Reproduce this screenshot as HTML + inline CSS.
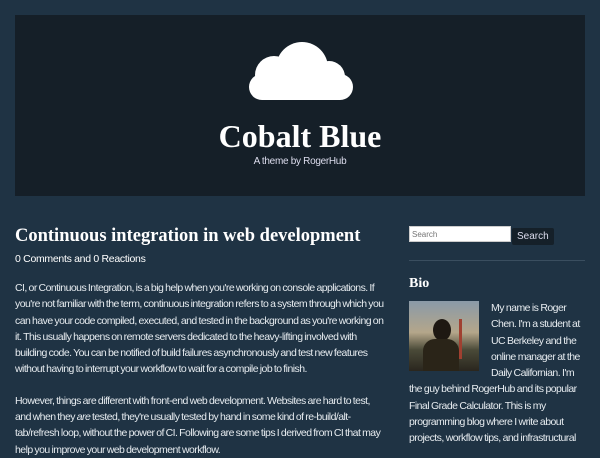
<!DOCTYPE html>
<html><head><style>
html,body{margin:0;height:450px;}
body{background:#1f3344;width:600px;overflow:hidden;font-family:"Liberation Sans",sans-serif;color:#fff;position:relative;}
.hdr{position:absolute;left:15px;top:15px;width:570px;height:181px;background:#151f28;}
.t{position:absolute;left:0;width:570px;text-align:center;top:101px;font-family:"Liberation Serif",serif;font-weight:bold;font-size:32px;line-height:40px;}
.s{position:absolute;left:0;width:570px;text-align:center;top:141px;font-size:10px;color:#dde;letter-spacing:-0.3px;}
.main{position:absolute;left:15px;top:225px;width:372px;}
h1{font-family:"Liberation Serif",serif;font-size:18.5px;margin:0;line-height:22px;}
.meta{font-size:10.5px;margin-top:6px;letter-spacing:-0.3px;}
p{font-size:10.5px;line-height:16.3px;margin:15px 0 0;color:#e6ebef;letter-spacing:-0.55px;word-spacing:-0.6px;}
.side{position:absolute;left:409px;top:226px;width:176px;}
input{width:96px;height:14px;border:1px solid #ccc;font-size:8px;padding:0 2px;margin:0;vertical-align:top;box-sizing:content-box;}
.btn{display:inline-block;background:#152029;color:#dde;font-size:10px;padding:0 5px;height:17px;line-height:17px;margin-left:1px;border-radius:2px;}
.hr{border-top:1px solid #3a4e5f;margin-top:15px;}
h2{font-family:"Liberation Serif",serif;font-size:14px;margin:15px 0 0;}
.bio{font-size:10.5px;line-height:16.3px;margin-top:8px;color:#e6ebef;letter-spacing:-0.55px;word-spacing:-0.4px;}
.img{float:left;width:70px;height:70px;margin:1px 12px 4px 0;background:linear-gradient(180deg,#8a9aa8 0%,#b4a68a 45%,#4a4a38 70%,#2a261e 100%);position:relative;}
</style></head><body>
<div class="hdr">
<svg style="position:absolute;left:234px;top:26px" width="104" height="60" viewBox="0 0 104 60">
<g fill="#fff"><circle cx="53" cy="27" r="26"/><circle cx="25" cy="34" r="19"/><rect x="0" y="33" width="104" height="26" rx="13"/><circle cx="80" cy="36" r="16"/></g></svg>
<div class="t">Cobalt Blue</div>
<div class="s">A theme by RogerHub</div>
</div>
<div class="main">
<h1>Continuous integration in web development</h1>
<div class="meta">0 Comments and 0 Reactions</div>
<p>CI, or Continuous Integration, is a big help when you're working on console applications. If you're not familiar with the term, continuous integration refers to a system through which you can have your code compiled, executed, and tested in the background as you're working on it. This usually happens on remote servers dedicated to the heavy-lifting involved with building code. You can be notified of build failures asynchronously and test new features without having to interrupt your workflow to wait for a compile job to finish.</p>
<p>However, things are different with front-end web development. Websites are hard to test, and when they <i>are</i> tested, they're usually tested by hand in some kind of re-build/alt-tab/refresh loop, without the power of CI. Following are some tips I derived from CI that may help you improve your web development workflow.</p>
</div>
<div class="side">
<input placeholder="Search"><span class="btn">Search</span>
<div class="hr"></div>
<h2>Bio</h2>
<div class="bio"><div class="img"><div style="position:absolute;left:24px;top:18px;width:18px;height:22px;border-radius:50%;background:#1e1812"></div><div style="position:absolute;left:14px;top:38px;width:36px;height:32px;border-radius:12px 12px 0 0;background:#2a2418"></div><div style="position:absolute;left:50px;top:18px;width:3px;height:40px;background:#a04030"></div></div>My name is Roger Chen. I'm a student at UC Berkeley and the online manager at the Daily Californian. I'm the guy behind RogerHub and its popular Final Grade Calculator. This is my programming blog where I write about projects, workflow tips, and infrastructural</div>
</div>
</body></html>
